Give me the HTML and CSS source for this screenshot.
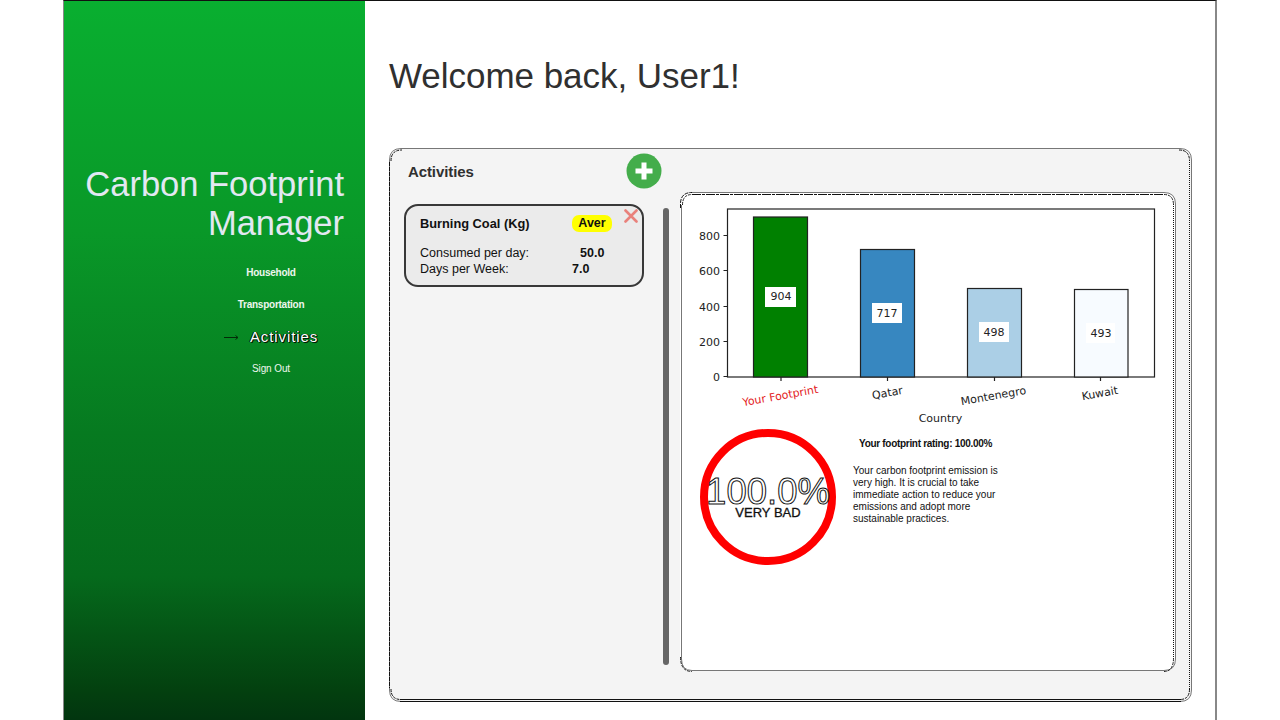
FILE: index.html
```html
<!DOCTYPE html>
<html lang="en">
<head>
<meta charset="utf-8">
<title>Carbon Footprint Manager</title>
<link rel="stylesheet" href="styles.css">
</head>
<body>
<div class="app">
  <aside class="sidebar">
    <h1 class="brand">Carbon Footprint<br>Manager</h1>
    <nav class="menu">
      <a class="menu-item">Household</a>
      <a class="menu-item">Transportation</a>
      <a class="menu-item active"><svg class="arrow" width="16" height="7" viewBox="0 0 16 7"><path d="M0 3.500H14M11.500 1.500L14 3.500L11.500 5.500" fill="none" stroke="#032b08" stroke-width="1"/></svg><span class="active-label">Activities</span></a>
      <a class="menu-item signout">Sign Out</a>
    </nav>
  </aside>
  <main class="main">
    <h2 class="welcome">Welcome back, User1!</h2>
    <section class="board">
      <svg class="frame" width="803" height="554" viewBox="0 0 803 554" fill="none">
        <path d="M12 .5H791Q802.500 .5 802.500 12V542Q802.500 553.500 791 553.500H12Q.5 553.500 .5 542V12Q.5 .5 12 .5" stroke="#777"/>
        <path d="M11 553.500H792M11 551.500H792" stroke="#111"/>
        <path d="M.5 14V540" stroke="#111" stroke-dasharray="4 1"/>
        <path d="M800.500 12V542" stroke="#111" stroke-dasharray="1 1"/>
        <path d="M2 13Q2 2 13 2M790 2Q800.500 2 800.500 13M2 541Q2 551.500 12 551.500M800.500 541Q800.500 551.500 791 551.500" stroke="#111" stroke-dasharray="3 1"/>
      </svg>
      <div class="activities">
        <header class="activities-head">
          <h3 class="activities-title">Activities</h3>
          <svg class="add" width="36" height="36" viewBox="0 0 36 36"><circle cx="18" cy="18" r="17.500" fill="#44ad4b"/><path d="M18 9.500V26.500M9.500 18H26.500" stroke="#fff" stroke-width="5"/></svg>
        </header>
        <article class="activity">
          <svg class="remove" width="14" height="14" viewBox="0 0 14 14"><path d="M1.500 1.500L12.500 12.500M12.500 1.500L1.500 12.500" stroke="#e9817b" stroke-width="2.600" stroke-linecap="round"/></svg>
          <div class="row row-title"><b class="label name">Burning Coal (Kg)</b><b class="badge">Aver</b></div>
          <div class="row"><span class="label">Consumed per day:</span><b class="value shifted">50.0</b></div>
          <div class="row"><span class="label">Days per Week:</span><b class="value">7.0</b></div>
        </article>
      </div>
      <div class="scrollbar"></div>
      <div class="report">
        <svg class="frame" width="496" height="480" viewBox="0 0 496 480" fill="none">
          <path d="M12 .5H484Q495.500 .5 495.500 12V467Q495.500 478.500 484 478.500H12Q1.500 478.500 1.500 467V13" stroke="#777"/>
          <path d="M.5 16V12Q.5 .5 12 .5" stroke="#111" stroke-dasharray="4 1"/>
          <path d="M12 2.500H484" stroke="#111" stroke-dasharray="9 1 3 1"/>
          <path d="M493.500 12V467" stroke="#111" stroke-dasharray="1 1"/>
          <path d="M2.500 13Q2.500 2.500 12 2.500M484 2.500Q493.500 2.500 493.500 13M.5 465Q.5 479.500 12 479.500M493.500 466Q493.500 479.500 484 479.500" stroke="#222" stroke-dasharray="3 1"/>
        </svg>
        <svg class="chart" width="494" height="236" viewBox="681 192 494 236">
          <g stroke="#222" stroke-width="1.200">
            <rect x="727.500" y="209" width="427" height="168" fill="#fff"/>
            <rect x="753.500" y="217" width="54" height="160" fill="#008000"/>
            <rect x="860.500" y="249.500" width="54" height="127.500" fill="#3787c0"/>
            <rect x="967.500" y="288.500" width="54" height="88.500" fill="#abcfe6"/>
            <rect x="1074.500" y="289.500" width="53.500" height="87.500" fill="#f7fbff"/>
            <path d="M723.500 235.500H727.500M723.500 270.500H727.500M723.500 306.500H727.500M723.500 341.500H727.500M723.500 376.500H727.500M781 377V381M887.500 377V381M994.500 377V381M1100.500 377V381"/>
          </g>
          <g fill="#fff"><rect x="765" y="287" width="31" height="20"/><rect x="872" y="303" width="30" height="20"/><rect x="979" y="322" width="30" height="20"/><rect x="1086" y="323" width="29" height="20"/></g>
          <g class="chart-text" text-anchor="end"><text x="720" y="239.500">800</text><text x="720" y="274.500">600</text><text x="720" y="310.500">400</text><text x="720" y="345.500">200</text><text x="720" y="381">0</text></g>
          <g class="chart-text" text-anchor="middle">
            <text x="781" y="300">904</text><text x="887" y="316.500">717</text><text x="994" y="335.500">498</text><text x="1101" y="336.500">493</text>
            <text class="own" transform="translate(781 399.500) rotate(-10)">Your Footprint</text>
            <text transform="translate(888 396.500) rotate(-10)">Qatar</text>
            <text transform="translate(994 399.500) rotate(-10)">Montenegro</text>
            <text transform="translate(1100.500 397) rotate(-10)">Kuwait</text>
            <text x="940.500" y="422">Country</text>
          </g>
        </svg>
        <div class="rating">
          <div class="ring"><span class="percent">100.0%</span><span class="verdict">VERY BAD</span></div>
          <div class="advice">
            <b class="advice-title">Your footprint rating: 100.00%</b>
            <p class="advice-text">Your carbon footprint emission is<br>very high. It is crucial to take<br>immediate action to reduce your<br>emissions and adopt more<br>sustainable practices.</p>
          </div>
        </div>
      </div>
    </section>
  </main>
</div>
</body>
</html>
```
FILE: styles.css
```css
* { box-sizing: border-box; }
body { margin: 0; background: #fff; font-family: "Liberation Sans", Arial, sans-serif; color: #111; }
h1, h2, h3, p { margin: 0; font-weight: 400; }
.app { display: flex; width: 1154px; height: 720px; margin-left: 63px; border: solid #888; border-width: 1px 2px 0 1px; border-top-color: #111; background: #fff; overflow: hidden; }
.sidebar { width: 301px; flex: none; padding: 164px 21px 0 0; background: linear-gradient(#09af30 0%, #099828 32%, #067a20 60%, #056a1c 80%, #03400f 96%, #02350f 100%); color: #e2e8f2; }
.brand { font-size: 34.600px; letter-spacing: -.05px; line-height: 39px; text-align: right; white-space: nowrap; }
.menu { display: flex; flex-direction: column; align-items: center; width: 120px; margin: 14px 0 0 147px; }
.menu-item { height: 32px; line-height: 32px; font-size: 10px; font-weight: 700; letter-spacing: -.25px; color: #eef6ee; white-space: nowrap; }
.active { display: flex; align-items: center; gap: 10px; }
.active-label { font-size: 15px; font-weight: 400; letter-spacing: .9px; color: #fff; text-shadow: 1px 1px 0 #001b04, 1px 0 0 #001b04, -1px 0 0 #001b04; }
.signout { font-weight: 400; letter-spacing: -.1px; }
.main { flex: 1; padding: 55px 0 0 24px; }
.welcome { height: 92px; line-height: 40px; font-size: 35px; letter-spacing: -.04px; color: #303030; }
.board { position: relative; display: flex; width: 803px; height: 554px; border-radius: 14px; background: #f4f4f4; }
.frame { position: absolute; left: 0; top: 0; }
.activities { width: 274px; padding: 5px 0 0 15px; }
.activities-head { display: flex; justify-content: space-between; align-items: center; height: 36px; padding: 0 1px 0 4px; }
.activities-title { font-size: 15px; font-weight: 700; letter-spacing: -.1px; color: #303030; }
.activity { position: relative; width: 240px; height: 83px; margin-top: 15px; padding: 9px 0 0 14px; border: 2px solid #383838; border-radius: 14px; background: #ebebeb; font-size: 12.500px; }
.remove { position: absolute; right: 4px; top: 3px; }
.row { display: flex; height: 16px; line-height: 16px; white-space: nowrap; }
.row-title { height: 30px; line-height: 17px; }
.label { width: 152px; }
.name { font-size: 12.800px; }
.badge { width: 40px; height: 17px; border-radius: 7px; background: #ff0; text-align: center; }
.shifted { padding-left: 8px; }
.scrollbar { width: 6px; height: 457px; margin-top: 60px; border-radius: 3px; background: #666; }
.report { position: relative; width: 496px; height: 479px; margin: 44px 0 0 11px; border-radius: 13px; background: #fff; }
.chart { display: block; margin: 0 1px; position: relative; }
.chart-text { font-family: "DejaVu Sans", sans-serif; font-size: 11px; fill: #222; }
.own { fill: #e31a1c; }
.rating { display: flex; padding: 1px 0 0 20px; }
.ring { display: flex; flex-direction: column; align-items: center; width: 136px; height: 136px; padding-top: 36px; border: 8px solid #f00; border-radius: 50%; }
.percent { line-height: 38px; font-size: 36.500px; color: #fff; -webkit-text-stroke: 1px #111; white-space: nowrap; }
.verdict { margin-top: -5px; line-height: 14px; font-size: 13px; -webkit-text-stroke: .3px #111; }
.advice { padding: 9px 0 0 17px; }
.advice-title { display: block; padding-left: 6px; font-size: 10px; letter-spacing: -.3px; line-height: 12px; }
.advice-text { margin-top: 15px; font-size: 10px; line-height: 12px; white-space: nowrap; }
```
